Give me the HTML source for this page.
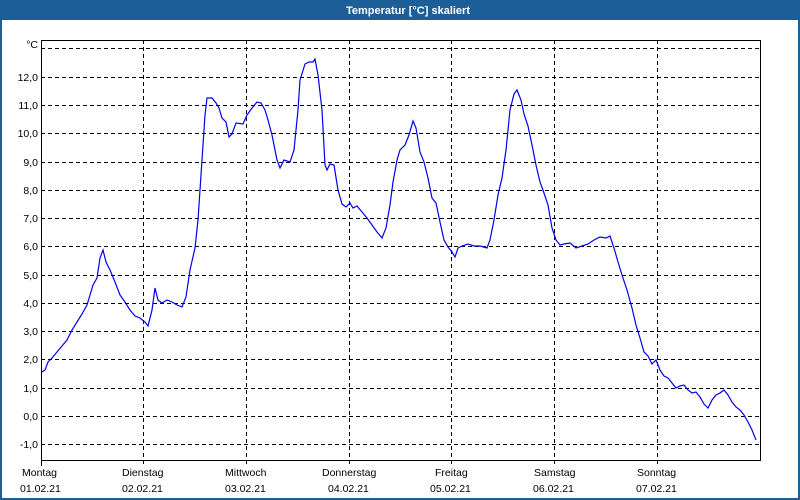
<!DOCTYPE html>
<html><head><meta charset="utf-8"><style>
html,body{margin:0;padding:0;width:800px;height:500px;overflow:hidden;background:#fff;font-family:"Liberation Sans",Tahoma,sans-serif}
</style></head><body>
<svg width="800" height="500" xmlns="http://www.w3.org/2000/svg" font-family="Liberation Sans, sans-serif" font-size="10.5">
<rect x="0" y="0" width="800" height="500" fill="#1c5e98"/>
<rect x="2" y="20" width="796" height="478" fill="#fff"/>
<text x="408" y="14" text-anchor="middle" fill="#fff" font-weight="bold" font-size="11">Temperatur [°C] skaliert</text>
<g stroke="#000" stroke-width="1" stroke-dasharray="4,3" fill="none">
<line x1="41" y1="48.5" x2="760" y2="48.5"/>
<line x1="41" y1="77.5" x2="760" y2="77.5"/>
<line x1="41" y1="105.5" x2="760" y2="105.5"/>
<line x1="41" y1="133.5" x2="760" y2="133.5"/>
<line x1="41" y1="162.5" x2="760" y2="162.5"/>
<line x1="41" y1="190.5" x2="760" y2="190.5"/>
<line x1="41" y1="218.5" x2="760" y2="218.5"/>
<line x1="41" y1="246.5" x2="760" y2="246.5"/>
<line x1="41" y1="275.5" x2="760" y2="275.5"/>
<line x1="41" y1="303.5" x2="760" y2="303.5"/>
<line x1="41" y1="331.5" x2="760" y2="331.5"/>
<line x1="41" y1="359.5" x2="760" y2="359.5"/>
<line x1="41" y1="388.5" x2="760" y2="388.5"/>
<line x1="41" y1="416.5" x2="760" y2="416.5"/>
<line x1="41" y1="444.5" x2="760" y2="444.5"/>
<line x1="143.5" y1="40" x2="143.5" y2="466"/>
<line x1="246.5" y1="40" x2="246.5" y2="466"/>
<line x1="349.5" y1="40" x2="349.5" y2="466"/>
<line x1="451.5" y1="40" x2="451.5" y2="466"/>
<line x1="554.5" y1="40" x2="554.5" y2="466"/>
<line x1="657.5" y1="40" x2="657.5" y2="466"/>
</g>
<path d="M41.5 466 V40.5 H760.5 V460.5 H41" stroke="#000" fill="none"/>
<g text-anchor="end" fill="#000">
<text x="38" y="48">°C</text>
<text x="38" y="81">12,0</text><text x="38" y="109">11,0</text><text x="38" y="137">10,0</text>
<text x="38" y="166">9,0</text><text x="38" y="194">8,0</text><text x="38" y="222">7,0</text>
<text x="38" y="250">6,0</text><text x="38" y="279">5,0</text><text x="38" y="307">4,0</text>
<text x="38" y="335">3,0</text><text x="38" y="363">2,0</text><text x="38" y="392">1,0</text>
<text x="38" y="420">0,0</text><text x="38" y="448">-1,0</text>
</g>
<g fill="#000">
<text x="22" y="476">Montag</text><text x="20" y="492">01.02.21</text>
<text x="122" y="476">Dienstag</text><text x="122" y="492">02.02.21</text>
<text x="225" y="476">Mittwoch</text><text x="225" y="492">03.02.21</text>
<text x="322" y="476">Donnerstag</text><text x="328" y="492">04.02.21</text>
<text x="435" y="476">Freitag</text><text x="430" y="492">05.02.21</text>
<text x="534" y="476">Samstag</text><text x="533" y="492">06.02.21</text>
<text x="637" y="476">Sonntag</text><text x="636" y="492">07.02.21</text>
</g>
<polyline fill="none" stroke="#0000ee" stroke-width="1.2" points="42,372 45,370 48,362 52,358 57,352 62,346 67,340 72,330 77,322 82,314 87,305 90,295 93,285 97,278 100,258 103,250 106,262 110,270 115,282 120,295 125,302 130,310 135,316 140,318 145,322 148,326 152,310 155,288 158,300 162,303 167,300 172,302 177,305 182,307 186,297 190,270 195,248 198,220 202,160 205,115 207,98 212,98 216,103 219,108 222,118 226,122 229,137 232,134 236,123 243,124 247,115 252,108 257,102 261,103 265,110 268,120 272,135 277,160 280,168 284,160 290,162 294,150 298,110 300,80 305,64 309,62 313,62 315,59 318,75 322,110 325,165 327,170 330,164 334,165 338,190 342,204 346,207 350,203 353,208 357,206 362,212 367,218 372,225 377,232 382,238 386,228 390,205 393,182 397,160 400,150 405,145 409,135 413,121 416,128 420,152 424,162 428,178 432,198 436,203 440,222 444,240 448,247 452,252 455,257 458,248 462,246 468,244 474,246 480,246 487,248 490,240 494,220 498,195 502,178 506,150 510,110 514,94 517,90 521,100 524,114 528,126 532,145 536,165 540,182 544,193 548,205 552,228 556,240 560,245 564,244 570,243 576,248 582,246 588,244 594,240 600,237 606,238 610,236 614,248 618,262 622,275 627,290 632,308 636,325 640,338 644,352 648,356 652,364 656,360 660,370 664,376 668,378 672,383 676,388 680,386 684,385 688,390 692,393 696,392 700,397 704,404 708,408 712,400 716,395 720,393 724,390 728,395 732,402 736,407 740,410 744,415 748,422 752,430 756,440"/>
</svg>
</body></html>
